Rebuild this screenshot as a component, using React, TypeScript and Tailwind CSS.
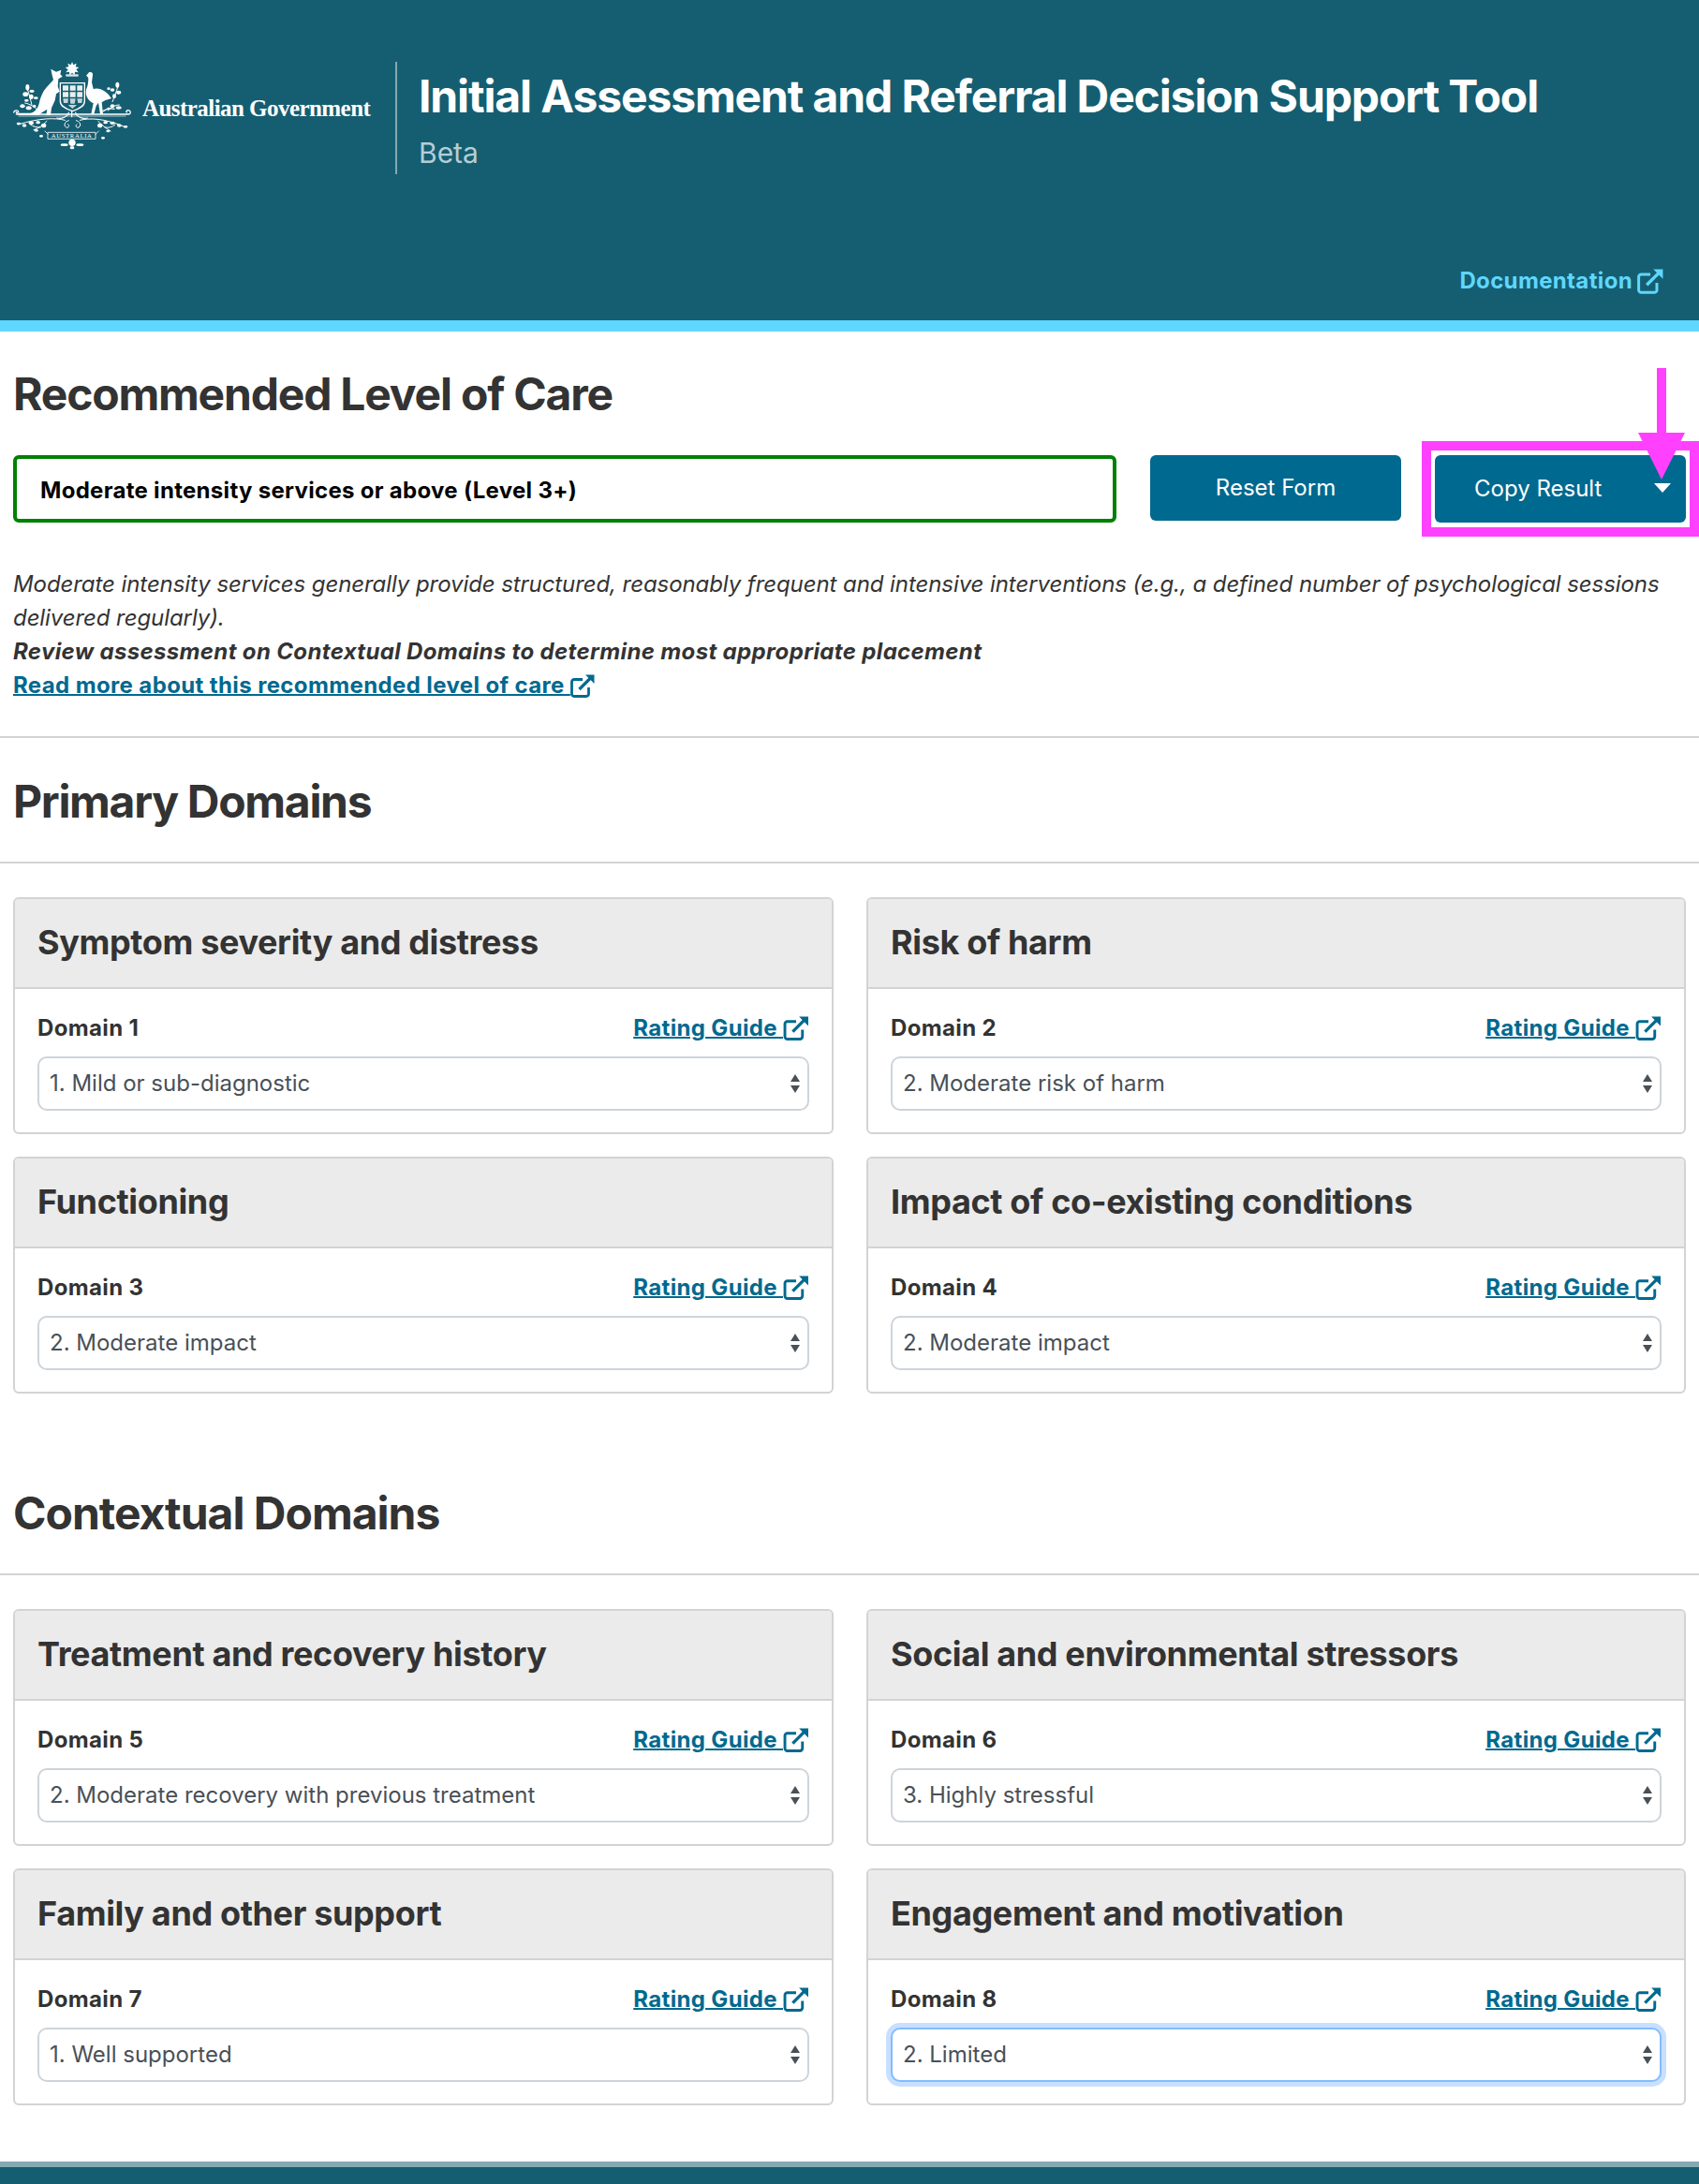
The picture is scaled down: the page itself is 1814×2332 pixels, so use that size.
import React from 'react';

const ExternalIcon: React.FC<{ className?: string }> = ({ className }) => (
  <svg viewBox="0 0 26 25" className={className} fill="none" stroke="currentColor">
    <path d="M13 5.500H4a2.500 2.500 0 0 0-2.500 2.500v13A2.500 2.500 0 0 0 4 23.500h13a2.500 2.500 0 0 0 2.500-2.500v-7" strokeWidth="2.800" />
    <path d="M9.500 16 21.500 4" strokeWidth="3.200" />
    <path d="M16 .5h9.500V10z" fill="currentColor" stroke="none" />
  </svg>
);

const Crest: React.FC = () => (
  <svg viewBox="0 0 405 300" className="w-[135px] h-[100px] shrink-0 text-white" fill="currentColor">
    {/* star and wreath */}
    <path d="M201 18l4 10 10-5-3 11 11 2-9 7 7 9-11-2-1 11-8-8-8 8-1-11-11 2 7-9-9-7 11-2-3-11 10 5z" />
    <rect x="180" y="58" width="42" height="7" rx="3.500" opacity=".8" />
    {/* kangaroo */}
    <path d="M133 41l17 9 16-6-3 14 7 7-13 8-2 24 6 16-11 8-4 21-11 24-3 22h-14l3-18-16 10-10 8H36c-6 0-10-3-8-6h40c14-3 22-14 27-30 4-18 10-36 24-52 7-8 17-17 22-24l-4-15z" />
    {/* emu */}
    <path d="M246 62l9-10c7-3 13 1 12 8l-3 24 5 21c20-7 44 8 58 30l-21 7-10 6 4 37h-9l-6-36-7 10-7 26h-9l7-34c-20-10-30-31-20-52 3-7 4-20 4-28-1-4-4-7-7-9z" />
    {/* shield */}
    <path d="M163 86h78v58c0 16-16 24-39 32-23-8-39-16-39-32z" fill="none" stroke="currentColor" strokeWidth="4" />
    <path d="M171 94h18v16h-18zM194 94h18v16h-18zM217 94h17v16h-17zM171 115h18v16h-18zM194 115h18v16h-18zM217 115h17v16h-17z" opacity=".9" />
    <path d="M172 136h17l-2 14h-13zM194 136h18l-3 16h-13zM217 136h17l-2 14h-12zM188 156h28l-14 12z" opacity=".75" />
    {/* compartment */}
    <g fill="none" stroke="currentColor" strokeLinecap="round">
      <path d="M14 180c2-8 13-8 15-2-1 4-6 4-7 1M22 186h362c6-3 5-12-3-13-6 0-8 5-5 7M300 176c12-8 24-10 36-7" strokeWidth="4" />
      <path d="M30 192h342" strokeWidth="2.500" opacity=".75" />
      <path d="M200 176v18M190 180c-2 14-22 22-38 18M212 180c2 14 22 22 38 18" strokeWidth="3.500" />
      {/* wreath stems */}
      <path d="M178 205c-30-8-80-8-150 14M226 205c30-8 80-6 140 20M120 208c-12 12-24 22-42 28M284 208c12 12 24 22 40 32M66 218c10 8 20 10 34 10M338 220c-10 8-20 10-32 8" strokeWidth="3" />
      <path d="M72 156c-4-18-10-38-16-58M330 146c6-14 12-30 18-50M50 150c14 2 30 12 42 24M352 156c-14 0-26 8-36 18" strokeWidth="3" />
      <path d="M190 206c-12 2-18 16-8 22 8 3 12-6 6-10M214 206c12 2 18 16 8 22-8 3-12-6-6-10" strokeWidth="3" />
      <path d="M124 244h152v21H124zM124 250l-10-10M276 250l10-10" strokeWidth="2.500" />
    </g>
    <text x="200" y="262" textAnchor="middle" fontFamily="'Liberation Serif', serif" fontSize="20" letterSpacing="2">AUSTRALIA</text>
    {/* foliage */}
    <g>
      <ellipse cx="58" cy="100" rx="6" ry="10" /><ellipse cx="72" cy="112" rx="8" ry="5" /><ellipse cx="52" cy="122" rx="9" ry="7" />
      <ellipse cx="70" cy="130" rx="7" ry="8" /><ellipse cx="85" cy="134" rx="7" ry="4" /><ellipse cx="55" cy="142" rx="7" ry="4" />
      <ellipse cx="42" cy="160" rx="8" ry="6" /><ellipse cx="62" cy="166" rx="9" ry="6" /><ellipse cx="80" cy="160" rx="5" ry="5" />
      <ellipse cx="346" cy="92" rx="6" ry="9" /><ellipse cx="330" cy="108" rx="7" ry="5" /><ellipse cx="350" cy="116" rx="8" ry="6" />
      <ellipse cx="336" cy="128" rx="6" ry="7" /><ellipse cx="318" cy="104" rx="5" ry="4" /><ellipse cx="350" cy="165" rx="9" ry="5" />
      <ellipse cx="330" cy="160" rx="7" ry="6" /><ellipse cx="318" cy="168" rx="5" ry="4" />
      <ellipse cx="30" cy="216" rx="7" ry="4" /><ellipse cx="48" cy="222" rx="7" ry="5" /><ellipse cx="70" cy="214" rx="8" ry="6" />
      <ellipse cx="92" cy="212" rx="7" ry="5" /><ellipse cx="110" cy="222" rx="8" ry="7" /><ellipse cx="86" cy="238" rx="6" ry="4" />
      <ellipse cx="372" cy="226" rx="7" ry="4" /><ellipse cx="352" cy="222" rx="7" ry="5" /><ellipse cx="330" cy="214" rx="8" ry="5" />
      <ellipse cx="308" cy="212" rx="7" ry="5" /><ellipse cx="290" cy="222" rx="8" ry="7" /><ellipse cx="316" cy="240" rx="6" ry="4" />
      <ellipse cx="300" cy="262" rx="6" ry="4" /><ellipse cx="102" cy="256" rx="6" ry="4" />
      <circle cx="201" cy="277" r="11" /><ellipse cx="176" cy="284" rx="12" ry="4" /><ellipse cx="226" cy="284" rx="12" ry="4" /><ellipse cx="201" cy="293" rx="7" ry="5" />
    </g>
  </svg>
);

const SelectBox: React.FC<{ value: string; focused?: boolean }> = ({ value, focused }) => (
  <div
    className={`mt-[12px] h-[58px] flex items-center justify-between pl-[11px] pr-[7px] rounded-[10px] border-2 text-[24px] text-[#495057] bg-white ${
      focused ? 'border-[#80bdff] shadow-[0_0_0_5px_#c8dfff]' : 'border-[#ced4da]'
    }`}
  >
    <span>{value}</span>
    <svg viewBox="0 0 12 20" className="w-[12px] h-[20px] text-[#495057]" fill="currentColor">
      <path d="M6 0l5 8H1zM6 20l-5-8h10z" />
    </svg>
  </div>
);

const DomainCard: React.FC<{ title: string; domain: number; value: string; focused?: boolean }> = ({
  title,
  domain,
  value,
  focused,
}) => (
  <div className="border-2 border-[#d3d3d3] rounded-[6px] overflow-hidden bg-white">
    <div className="h-[96px] bg-[#ebebeb] border-b-2 border-[#d3d3d3] px-[24px] pb-[3px] flex items-center">
      <h3 className="text-[36px] font-bold tracking-[-0.36px] text-[#333] leading-none">{title}</h3>
    </div>
    <div className="px-[24px] pt-[24px] pb-[23px]">
      <div className="flex items-center justify-between h-[36px]">
        <span className="text-[24px] font-bold tracking-[0.35px] text-[#333]">Domain {domain}</span>
        <a href="#" className="flex items-center text-[24px] font-bold tracking-[0.35px] text-[#00698f]">
          <span className="underline decoration-[2px] whitespace-pre">Rating Guide </span>
          <ExternalIcon className="w-[28px] h-[26px]" />
        </a>
      </div>
      <SelectBox value={value} focused={focused} />
    </div>
  </div>
);

const primary = [
  { title: 'Symptom severity and distress', domain: 1, value: '1. Mild or sub-diagnostic' },
  { title: 'Risk of harm', domain: 2, value: '2. Moderate risk of harm' },
  { title: 'Functioning', domain: 3, value: '2. Moderate impact' },
  { title: 'Impact of co-existing conditions', domain: 4, value: '2. Moderate impact' },
];

const contextual = [
  { title: 'Treatment and recovery history', domain: 5, value: '2. Moderate recovery with previous treatment' },
  { title: 'Social and environmental stressors', domain: 6, value: '3. Highly stressful' },
  { title: 'Family and other support', domain: 7, value: '1. Well supported' },
  { title: 'Engagement and motivation', domain: 8, value: '2. Limited', focused: true },
];

export default function App() {
  return (
    <div className="min-h-[2332px] bg-white font-['Inter',sans-serif] text-[24px] leading-[36px] text-[#333] overflow-hidden flex flex-col">
      <header className="bg-[#155e71] h-[354px] border-b-[12px] border-[#5fd7fe] flex flex-col">
        <div className="flex items-start pt-[60px] pl-[10px]">
          <div className="flex items-center w-[384px] h-[100px]">
            <Crest />
            <span className="ml-[7px] mt-[10px] font-['Liberation_Serif',serif] font-bold text-[25px] leading-none text-white whitespace-nowrap tracking-[-0.55px]">
              Australian Government
            </span>
          </div>
          <div className="ml-[28px] mt-[6px] w-[2px] h-[120px] bg-[#85a9b1]" />
          <div className="ml-[23px] mt-[7px]">
            <h1 className="text-[48px] font-bold tracking-[-1.12px] text-white leading-[72px]">
              Initial Assessment and Referral Decision Support Tool
            </h1>
            <p className="text-[30px] leading-[45px] text-[#b5ced6] mt-[2px]">Beta</p>
          </div>
        </div>
        <div className="mt-auto pb-[24px] pr-[38px] flex justify-end">
          <a href="#" className="flex items-center gap-[5px] text-[24px] font-bold tracking-[0.35px] text-[#5fd7fe]">
            Documentation
            <ExternalIcon className="w-[28px] h-[27px]" />
          </a>
        </div>
      </header>

      <section className="px-[14px] pt-[38px]">
        <h2 className="text-[48px] font-bold tracking-[-1.2px] leading-[58px] text-[#333]">Recommended Level of Care</h2>
        <div className="mt-[36px] flex items-start">
          <div className="w-[1178px] h-[72px] border-4 border-[#008000] rounded-[6px] flex items-center pl-[25px] pt-[3px] font-bold tracking-[0.3px] text-black">
            Moderate intensity services or above (Level 3+)
          </div>
          <button className="ml-[36px] w-[268px] h-[70px] bg-[#00698f] text-white rounded-[6px]">Reset Form</button>
          <div className="relative ml-[36px]">
            <button className="w-[268px] h-[72px] bg-[#00698f] text-white rounded-[6px] flex items-center pl-[42px]">
              Copy Result
            </button>
            <div className="absolute right-[16px] top-[30px] w-0 h-0 border-x-[9px] border-x-transparent border-t-[10px] border-t-white" />
            {/* annotation on top of the screenshot */}
            <div className="absolute -left-[14px] -top-[15px] w-[296px] h-[102px] border-[10px] border-[#ff40ff]" />
            <div className="absolute left-[237px] -top-[93px] w-[10px] h-[70px] bg-[#ff40ff]" />
            <div className="absolute left-[217px] -top-[24px] w-0 h-0 border-x-[25px] border-x-transparent border-t-[50px] border-t-[#ff40ff]" />
          </div>
        </div>
        <div className="mt-[48px] italic">
          <p className="tracking-[-0.08px]">
            Moderate intensity services generally provide structured, reasonably frequent and intensive interventions
            (e.g., a defined number of psychological sessions delivered regularly).
          </p>
          <p className="font-bold tracking-[0.35px]">Review assessment on Contextual Domains to determine most appropriate placement</p>
        </div>
        <a href="#" className="inline-flex items-center font-bold tracking-[0.38px] text-[#00698f]">
          <span className="underline decoration-[2px] whitespace-pre">Read more about this recommended level of care </span>
          <ExternalIcon className="w-[26px] h-[25px]" />
        </a>
      </section>

      <div className="mt-[36px] border-t-2 border-[#d3d3d3]" />
      <h2 className="px-[14px] mt-[39px] text-[48px] font-bold tracking-[-1.3px] leading-[58px]">Primary Domains</h2>
      <div className="mt-[35px] border-t-2 border-[#d3d3d3]" />
      <div className="mt-[36px] mx-[14px] grid grid-cols-[876px_1fr] gap-x-[35px] gap-y-[24px]">
        {primary.map((d) => (
          <DomainCard key={d.domain} {...d} />
        ))}
      </div>

      <h2 className="px-[14px] mt-[99px] text-[48px] font-bold tracking-[-1px] leading-[58px]">Contextual Domains</h2>
      <div className="mt-[35px] border-t-2 border-[#d3d3d3]" />
      <div className="mt-[36px] mx-[14px] grid grid-cols-[876px_1fr] gap-x-[35px] gap-y-[24px]">
        {contextual.map((d) => (
          <DomainCard key={d.domain} {...d} />
        ))}
      </div>

      <footer className="mt-auto h-[24px] bg-[#155e71] border-t-[6px] border-[#85a9b1]" />
    </div>
  );
}
